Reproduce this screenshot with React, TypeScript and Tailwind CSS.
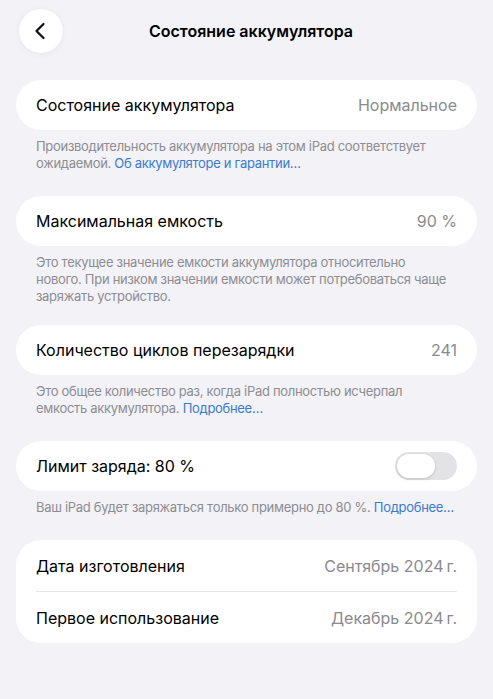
import { ChevronLeft } from "lucide-react";

function Row({ label, value, tall }: { label: string; value: string; tall?: boolean }) {
  return (
    <div className={`flex items-center justify-between px-5 ${tall ? "h-[51px]" : "h-[50px]"}`}>
      <span className="text-[#000]">{label}</span>
      <span className="text-[#8a8a8e]">{value}</span>
    </div>
  );
}

function Card({ children }: { children: React.ReactNode }) {
  return <div className="rounded-[25px] bg-white">{children}</div>;
}

function Footer({ children }: { children: React.ReactNode }) {
  return (
    <p className="whitespace-nowrap px-5 pt-[8px] text-[13px] leading-[17px] tracking-[-0.3px] text-[#8d8d92]">
      {children}
    </p>
  );
}

function Link({ children }: { children: React.ReactNode }) {
  return <span className="text-[#3a7bd0]">{children}</span>;
}

export default function App() {
  return (
    <div
      className="min-h-screen w-full bg-[#f2f2f7] text-[16px]"
      style={{ fontFamily: "Inter, 'Noto Sans', sans-serif" }}
    >
      <div className="relative flex h-[62px] items-center px-[19px]">
        <button className="flex h-[44px] w-[44px] items-center justify-center rounded-full bg-white shadow-[0_1px_6px_rgba(0,0,0,0.06)]">
          <ChevronLeft size={28} strokeWidth={1.9} className="text-[#111] -ml-[2px]" />
        </button>
        <h1 className="pointer-events-none absolute left-[9px] right-0 text-center text-[16px] font-semibold text-black">
          Состояние аккумулятора
        </h1>
      </div>

      <div className="px-4 pt-[18px]">
        <Card>
          <Row label="Состояние аккумулятора" value="Нормальное" />
        </Card>
        <Footer>
          Производительность аккумулятора на этом iPad соответствует
          <br />
          ожидаемой. <Link>Об аккумуляторе и гарантии…</Link>
        </Footer>

        <div className="h-[24px]" />
        <Card>
          <Row label="Максимальная емкость" value="90 %" />
        </Card>
        <Footer>
          Это текущее значение емкости аккумулятора относительно
          <br />
          нового. При низком значении емкости может потребоваться чаще
          <br />
          заряжать устройство.
        </Footer>

        <div className="h-[20px]" />
        <Card>
          <Row label="Количество циклов перезарядки" value="241" />
        </Card>
        <Footer>
          Это общее количество раз, когда iPad полностью исчерпал
          <br />
          емкость аккумулятора. <Link>Подробнее…</Link>
        </Footer>

        <div className="h-[24px]" />
        <Card>
          <div className="flex h-[50px] items-center justify-between px-5">
            <span className="text-black">Лимит заряда: 80 %</span>
            <div className="flex h-[28px] w-[62px] items-center rounded-full bg-[#e3e3e6] px-[2px]">
              <div className="h-[24px] w-[38px] rounded-full bg-white shadow-[0_1px_3px_rgba(0,0,0,0.18)]" />
            </div>
          </div>
        </Card>
        <Footer>
          Ваш iPad будет заряжаться только примерно до 80 %. <Link>Подробнее…</Link>
        </Footer>

        <div className="h-[24px]" />
        <Card>
          <Row tall label="Дата изготовления" value={"Сентябрь 2024\u202Fг."} />
          <div className="mx-5 h-px bg-[#e4e4e8]" />
          <Row tall label="Первое использование" value={"Декабрь 2024\u202Fг."} />
        </Card>
      </div>
    </div>
  );
}
